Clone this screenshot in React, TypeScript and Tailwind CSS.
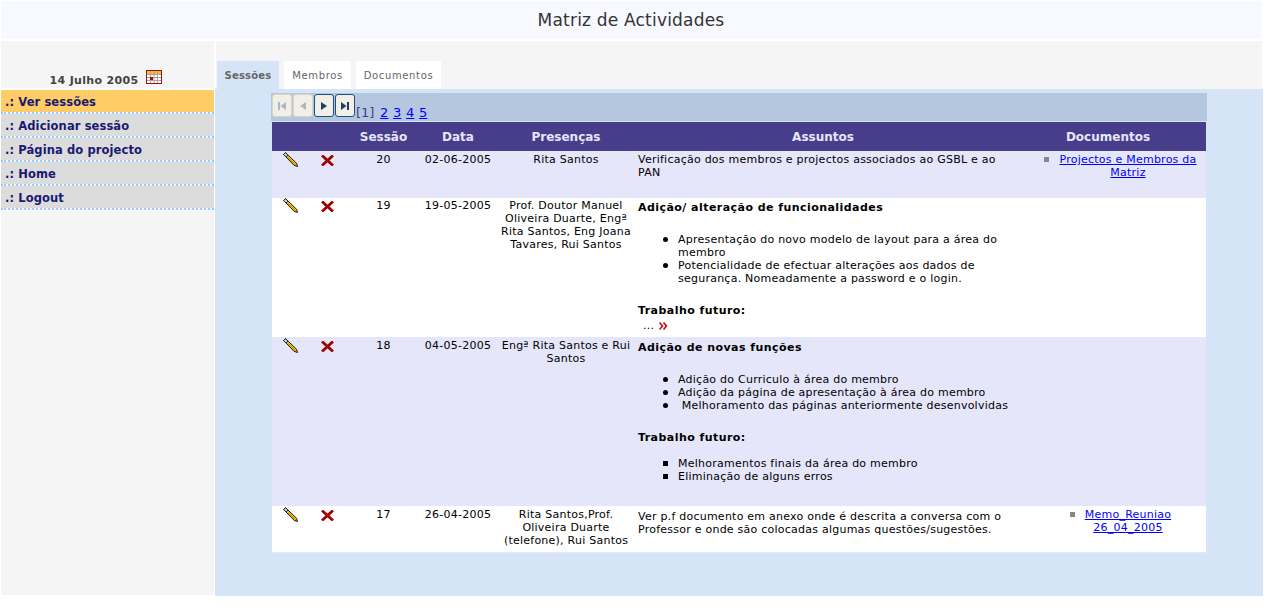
import { ReactNode } from 'react'

const font = "[font-family:'DejaVu_Sans',Verdana,sans-serif]"

function Pencil() {
  return (
    <svg width="15" height="15" viewBox="0 0 15 15" className="mx-auto block">
      <path d="M0.7 2.5 L2.5 0.7 L13.5 11.2 L14.5 14.5 L11 13.3 Z" fill="#f7c600" stroke="#1a1a1a" strokeWidth="1" />
      <path d="M0.7 2.5 L2.5 0.7 L5 3.1 L3.1 5 Z" fill="#dcdcf0" stroke="#1a1a1a" strokeWidth="1" />
      <path d="M5 5.5 L12.5 12.5" stroke="#b98a00" strokeWidth="1" />
    </svg>
  )
}

function Cross() {
  return (
    <svg width="13" height="11" viewBox="0 0 13 11" className="mx-auto block">
      <path d="M1 0.5 L12 10.5 M12 0.5 L1 10.5" stroke="#a00000" strokeWidth="2.8" />
    </svg>
  )
}

function MoreIcon() {
  return (
    <svg width="9" height="8" viewBox="0 0 9 8" className="ml-[1px] inline-block">
      <path d="M0.5 0.5 L3.5 4 L0.5 7.5 M4.5 0.5 L7.5 4 L4.5 7.5" fill="none" stroke="#c00000" strokeWidth="1.5" />
    </svg>
  )
}

function CalendarIcon() {
  return (
    <svg width="16" height="14" viewBox="0 0 16 14">
      <rect x="0.5" y="0.5" width="15" height="13" fill="#fff" stroke="#a01010" />
      <rect x="1" y="1" width="14" height="3" fill="#f0c020" />
      <path d="M1 4.5H15M1 7.5H15M1 10.5H15M4.5 1V13M8 1V13M11.5 1V13" stroke="#b0a0a0" strokeWidth="1" />
      <rect x="4" y="7" width="3" height="3" fill="#a01010" />
    </svg>
  )
}

function PagerButton({ enabled, path }: { enabled: boolean; path: string }) {
  return (
    <div
      className={`flex h-[23px] w-5 items-center justify-center rounded-[3px] border bg-[#f1efe6] ${
        enabled ? 'border-[#1c4f80]' : 'border-[#d8d5c8]'
      }`}
    >
      <svg width="10" height="10" viewBox="0 0 10 10">
        <path d={path} fill={enabled ? '#1f3f66' : '#a9b8c8'} />
      </svg>
    </div>
  )
}

function SideItem({ label, active }: { label: string; active?: boolean }) {
  return (
    <div
      className={`flex h-6 items-center border-b-2 border-dotted border-[#99ccff] bg-clip-padding pt-[2px] pl-[4px] text-[11.5px] font-bold tracking-[0.1px] whitespace-pre text-[#191970] ${
        active ? 'bg-[#ffcc66]' : 'bg-[#dcdcdc]'
      }`}
    >
      .: {label}
    </div>
  )
}

function Row({
  shaded,
  height,
  session,
  date,
  people,
  subject,
  docs,
  cellPad,
  subjectPad,
  pencilPad,
  crossPad,
}: {
  shaded?: boolean
  height: number
  session: string
  date: string
  people: ReactNode
  subject: ReactNode
  docs?: ReactNode
  cellPad: string
  subjectPad: string
  pencilPad: string
  crossPad: string
}) {
  return (
    <tr className={shaded ? 'bg-[#e6e6fa]' : 'bg-white'} style={{ height }}>
      <td className={`align-top ${pencilPad}`}>
        <Pencil />
      </td>
      <td className={`align-top ${crossPad}`}>
        <Cross />
      </td>
      <td className={`text-center align-top ${cellPad}`}>{session}</td>
      <td className={`text-center align-top ${cellPad}`}>{date}</td>
      <td className={`px-[2px] text-center align-top ${cellPad}`}>{people}</td>
      <td className={`px-[2px] align-top ${subjectPad}`}>{subject}</td>
      <td className={`pr-[9px] pl-[49px] text-center align-top ${cellPad}`}>{docs}</td>
    </tr>
  )
}

function DocLink({ children }: { children: ReactNode }) {
  return (
    <div className="relative inline-block">
      <span className="absolute top-[4px] left-[-15px] h-[5px] w-[5px] bg-[#888888]" />
      <a className="text-[#0000ff] underline">{children}</a>
    </div>
  )
}

function BulletList({ items, square, nowrap }: { items: string[]; square?: boolean; nowrap?: boolean }) {
  return (
    <ul className={`pl-[25px] ${nowrap ? 'whitespace-nowrap' : ''}`}>
      {items.map((item) => (
        <li key={item} className="flex">
          <span className={`mt-[4px] mr-[10px] h-[5px] w-[5px] shrink-0 bg-black ${square ? '' : 'rounded-full'}`} />
          <span>{item}</span>
        </li>
      ))}
    </ul>
  )
}

export default function App() {
  return (
    <div className={`h-[615px] w-[1267px] overflow-hidden bg-white p-[1px] text-[11px] leading-[13px] tracking-[0.24px] text-black ${font}`}>
      <header className="flex h-[38px] w-[1261px] items-center justify-center bg-[#f8f8ff] pr-[1px] text-[17px] tracking-[0.2px] text-[#333333]">
        Matriz de Actividades
      </header>

      <div className="mt-[2px] flex items-start">
        <aside className="flex h-[554px] w-[213px] flex-col bg-[#f5f5f5]">
          <div className="flex h-[47px] items-end justify-center gap-2 pr-[3px] pb-[1px] text-[11px] font-bold tracking-[0.33px] text-[#444444]">
            <span className="leading-[13px]">14 Julho 2005</span>
            <span className="mb-[3px]">
              <CalendarIcon />
            </span>
          </div>
          <div className="h-[2px] bg-white" />
          <SideItem label="Ver sessões" active />
          <SideItem label="Adicionar sessão" />
          <SideItem label="Página do projecto" />
          <SideItem label="Home" />
          <SideItem label="Logout" />
        </aside>

        <main className="ml-[1px] w-[1048px]">
          <div className="ml-[1px] flex h-[48px] w-[1046px] items-end gap-[5px] bg-[#f5f5f5] pl-[1px] text-[10px] tracking-[0.65px] text-[#666666]">
            <div className="flex h-[28px] w-[62px] items-center justify-center bg-[#d6e4f7] font-bold tracking-[0.2px]">Sessões</div>
            <div className="flex h-[28px] w-[67px] items-center justify-center bg-white">Membros</div>
            <div className="flex h-[28px] w-[85px] items-center justify-center bg-white">Documentos</div>
          </div>

          <div className="h-[507px] bg-[#d6e4f7] px-[56px] pt-[4px]">
            <div className="flex h-[28px] items-start gap-[1px] bg-[#b4c7df] pt-[1px] pl-[1px]">
              <PagerButton enabled={false} path="M1 1H3V9H1ZM9 1V9L3.5 5Z" />
              <PagerButton enabled={false} path="M8 1V9L2 5Z" />
              <PagerButton enabled path="M2 1L8 5L2 9Z" />
              <PagerButton enabled path="M1 1L6.5 5L1 9ZM7 1H9V9H7Z" />
              <div className="flex gap-[4.7px] pt-[11px] text-[13px] leading-[15px] tracking-normal">
                <span className="mr-[1px] text-[#483d8b]">[1]</span>
                <a className="text-[#0000ff] underline">2</a>
                <a className="text-[#0000ff] underline">3</a>
                <a className="text-[#0000ff] underline">4</a>
                <a className="text-[#0000ff] underline">5</a>
              </div>
            </div>

            <div className="px-[1px] pt-[1px]">
              <table className="w-[934px] table-fixed border-collapse border-b border-[#e6e6fa]">
                <colgroup>
                  <col className="w-[36px]" />
                  <col className="w-[39px]" />
                  <col className="w-[73px]" />
                  <col className="w-[76px]" />
                  <col className="w-[140px]" />
                  <col className="w-[374px]" />
                  <col className="w-[196px]" />
                </colgroup>
                <thead>
                  <tr className="h-[29px] bg-[#483d8b] text-[12px] font-bold tracking-normal text-[#e6e6fa]">
                    <th />
                    <th />
                    <th className="pt-[1px] font-bold">Sessão</th>
                    <th className="pt-[1px] font-bold">Data</th>
                    <th className="pt-[1px] font-bold">Presenças</th>
                    <th className="pt-[1px] font-bold">Assuntos</th>
                    <th className="pt-[1px] font-bold">Documentos</th>
                  </tr>
                </thead>
                <tbody>
                  <Row
                    shaded
                    height={47}
                    pencilPad="pt-[1px]"
                    crossPad="pt-[4px]"
                    cellPad="pt-[2px]"
                    subjectPad="pt-[2px]"
                    session="20"
                    date="02-06-2005"
                    people="Rita Santos"
                    subject="Verificação dos membros e projectos associados ao GSBL e ao PAN"
                    docs={
                      <DocLink>
                        Projectos e Membros da
                        <br />
                        Matriz
                      </DocLink>
                    }
                  />
                  <Row
                    height={139}
                    pencilPad="pt-0"
                    crossPad="pt-[3px]"
                    cellPad="pt-[1px]"
                    subjectPad="pt-[3px]"
                    session="19"
                    date="19-05-2005"
                    people="Prof. Doutor Manuel Oliveira Duarte, Engª Rita Santos, Eng Joana Tavares, Rui Santos"
                    subject={
                      <>
                        <div className="mb-[19px] font-bold tracking-[0.45px]">Adição/ alteração de funcionalidades</div>
                        <BulletList
                          items={[
                            'Apresentação do novo modelo de layout para a área do membro',
                            'Potencialidade de efectuar alterações aos dados de segurança. Nomeadamente a password e o login.',
                          ]}
                        />
                        <div className="mt-[19px] font-bold tracking-[0.45px]">Trabalho futuro:</div>
                        <div className="mt-[2px] pl-[5px]">
                          ... <MoreIcon />
                        </div>
                      </>
                    }
                  />
                  <Row
                    shaded
                    height={169}
                    pencilPad="pt-[1px]"
                    crossPad="pt-[4px]"
                    cellPad="pt-[2px]"
                    subjectPad="pt-[4px]"
                    session="18"
                    date="04-05-2005"
                    people="Engª Rita Santos e Rui Santos"
                    subject={
                      <>
                        <div className="mb-[19px] font-bold tracking-[0.45px]">Adição de novas funções</div>
                        <BulletList
                          nowrap
                          items={[
                            'Adição do Curriculo à área do membro',
                            'Adição da página de apresentação à área do membro',
                            '\u00a0Melhoramento das páginas anteriormente desenvolvidas',
                          ]}
                        />
                        <div className="mt-[19px] mb-[13px] font-bold tracking-[0.45px]">Trabalho futuro:</div>
                        <BulletList square items={['Melhoramentos finais da área do membro', 'Eliminação de alguns erros']} />
                      </>
                    }
                  />
                  <Row
                    height={46}
                    pencilPad="pt-[1px]"
                    crossPad="pt-[4px]"
                    cellPad="pt-[2px]"
                    subjectPad="pt-[4px]"
                    session="17"
                    date="26-04-2005"
                    people="Rita Santos,Prof. Oliveira Duarte (telefone), Rui Santos"
                    subject="Ver p.f documento em anexo onde é descrita a conversa com o Professor e onde são colocadas algumas questões/sugestões."
                    docs={
                      <DocLink>
                        Memo_Reuniao
                        <br />
                        26_04_2005
                      </DocLink>
                    }
                  />
                </tbody>
              </table>
            </div>
          </div>
        </main>
      </div>
    </div>
  )
}
